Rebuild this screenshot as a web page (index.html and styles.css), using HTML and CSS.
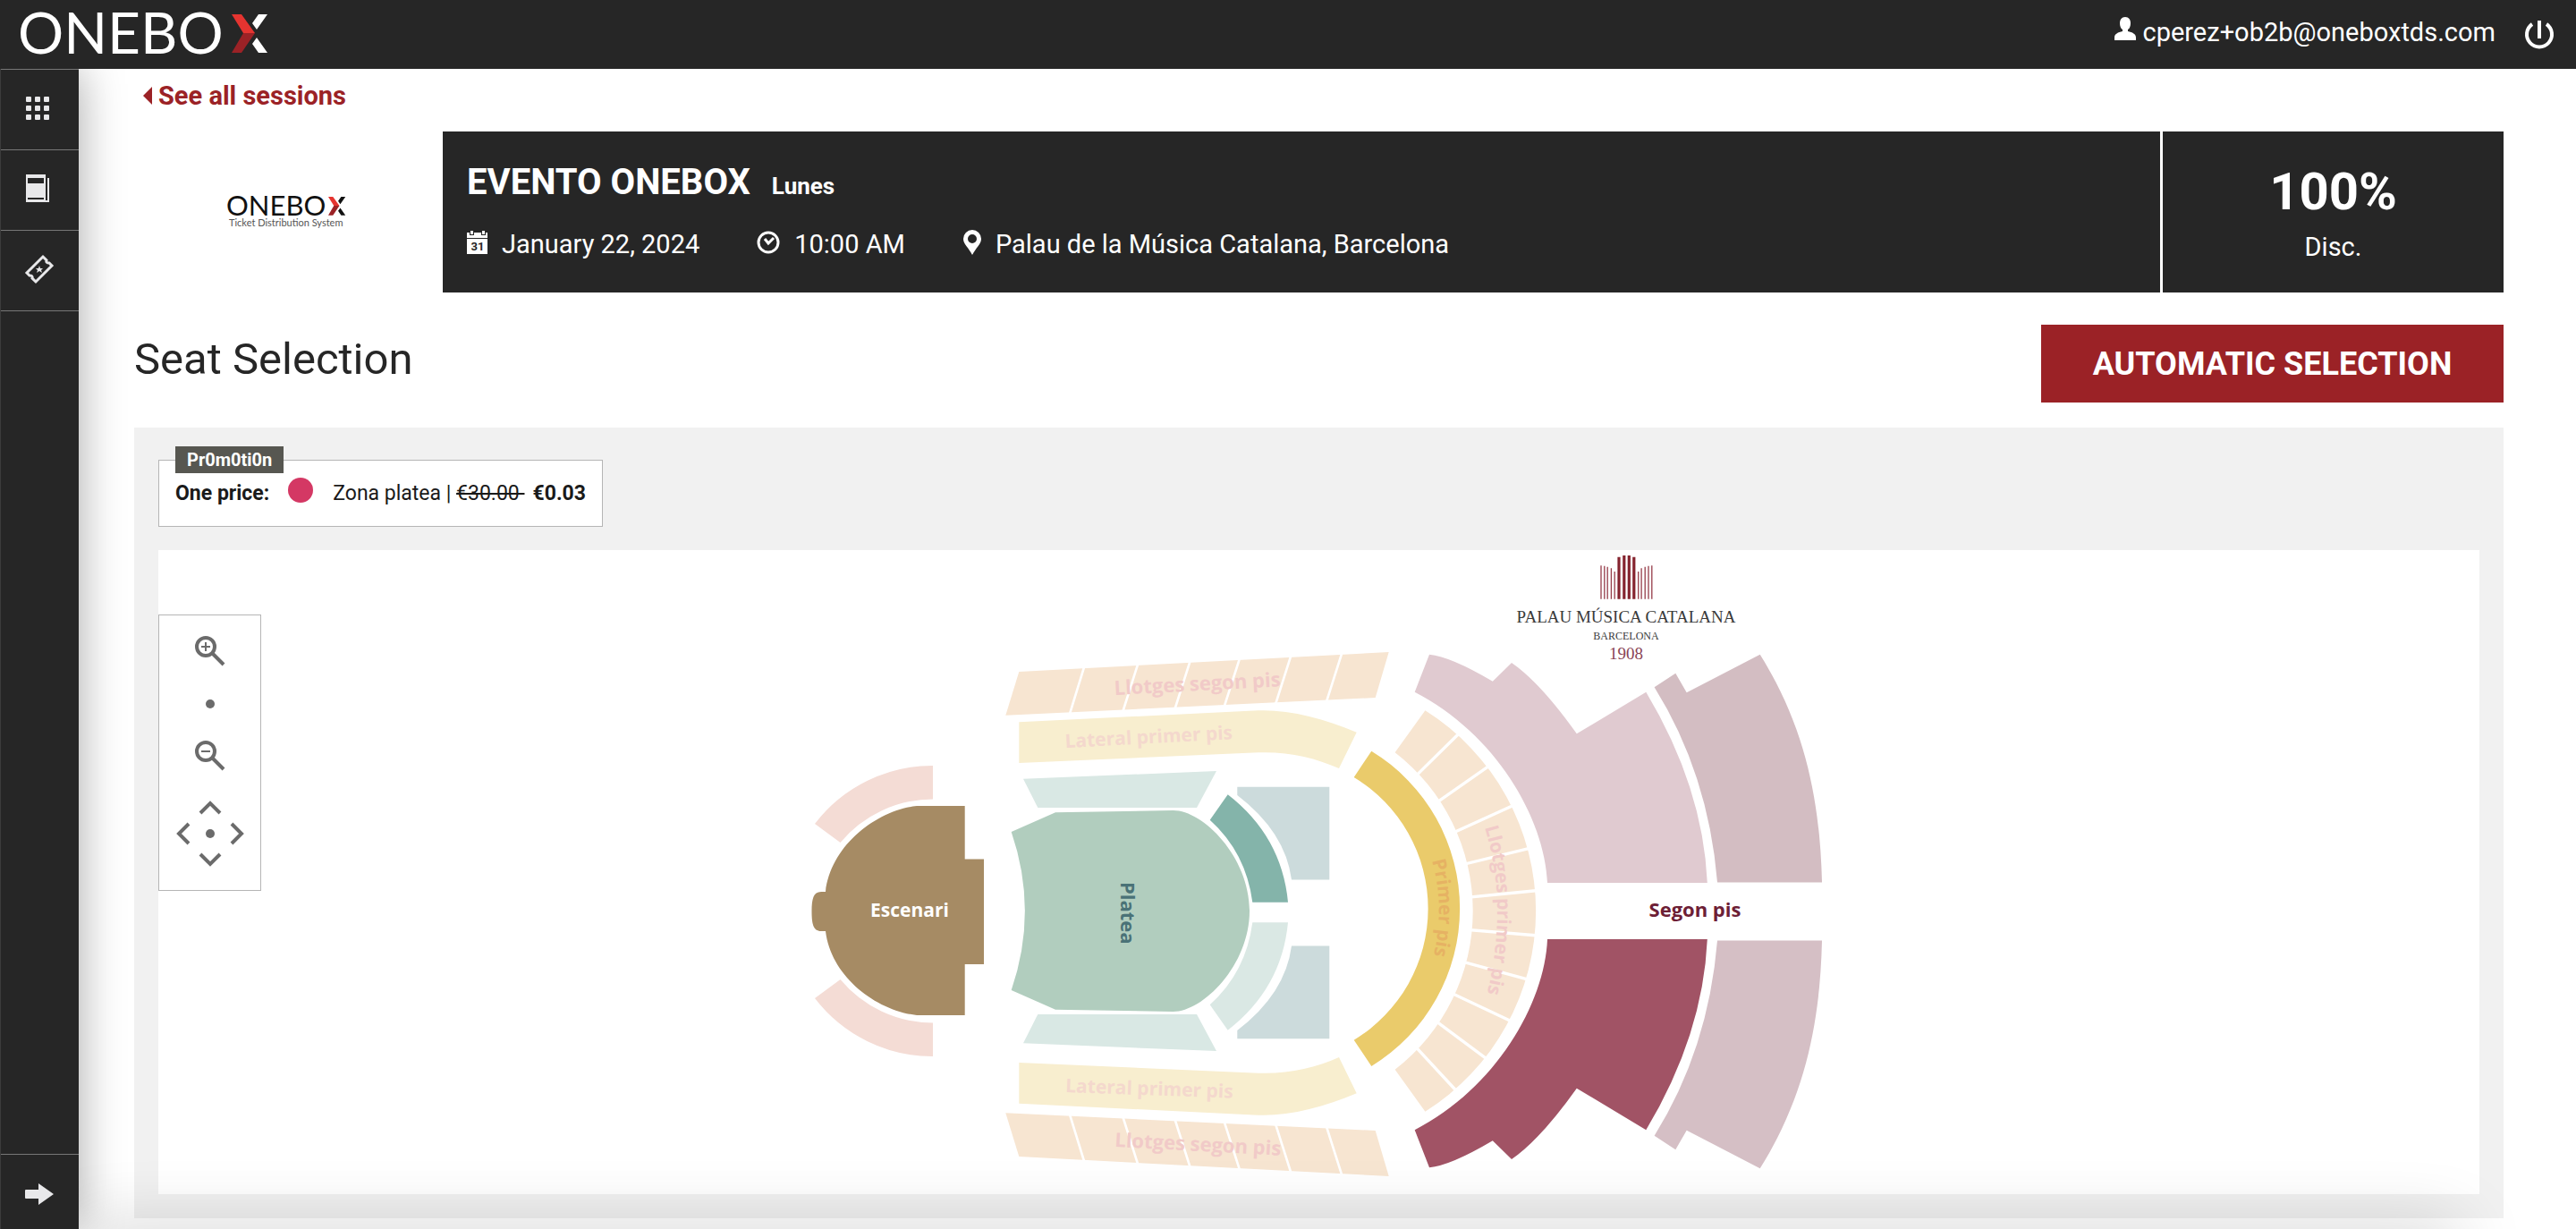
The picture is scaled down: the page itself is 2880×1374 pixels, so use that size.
FILE: index.html
```html
<!doctype html>
<html lang="en">
<head>
<meta charset="utf-8">
<title>Onebox - Seat Selection</title>
<link rel="stylesheet" href="styles.css">
</head>

<body>
<header class="header">
	<a class="logo" href="#" aria-label="Onebox">
		<svg width="280" height="77" viewBox="0 0 280 77">
			<text class="logo-text" x="0" y="60">ONEBO</text>
			<g transform="translate(239 16)">
				<path fill="#e53430" d="M0 0h11l15 21H13z"/>
				<path fill="#9b2226" d="M13 21h13L11 43H0z"/>
				<path fill="#fff" d="M30 0h10L28 17l-5-7zM28 26l12 17H30l-7-10z"/>
			</g>
		</svg>
	</a>
	<div class="user">
		<svg width="24" height="27" viewBox="0 0 24 27"><path fill="#fff" d="M12 0c4 0 6 3 6 7 0 3-1 6-3 7v2c5 1 9 3 9 7v3H0v-3c0-4 4-6 9-7v-2c-2-1-3-4-3-7 0-4 2-7 6-7z"/></svg>
		<span class="mail">cperez+ob2b@oneboxtds.com</span>
		<button class="power" aria-label="Log out">
			<svg width="34" height="34" viewBox="0 0 34 34" fill="none" stroke="#fff" stroke-width="4"><path d="M17 1v20"/><path d="M9 5a14 14 0 1 0 16 0"/></svg>
		</button>
	</div>
</header>

<div class="page">
<nav class="sidebar">
	<ul class="menu">
		<li><a href="#" aria-label="Catalog"><svg width="32" height="32" viewBox="0 0 32 32" fill="#e8e8ea"><rect x="1" y="3" width="6" height="6" rx="1"/><rect x="11" y="3" width="6" height="6" rx="1"/><rect x="21" y="3" width="6" height="6" rx="1"/><rect x="1" y="13" width="6" height="6" rx="1"/><rect x="11" y="13" width="6" height="6" rx="1"/><rect x="21" y="13" width="6" height="6" rx="1"/><rect x="1" y="23" width="6" height="6" rx="1"/><rect x="11" y="23" width="6" height="6" rx="1"/><rect x="21" y="23" width="6" height="6" rx="1"/></svg></a></li>
		<li><a href="#" aria-label="Reports"><svg width="32" height="32" viewBox="0 0 32 32"><path fill="#e8e8ea" d="M1 0h22v29H3v-1h18V26H1z"/><path fill="#e8e8ea" d="M1 26h2v3h22V4h2v27H1z"/><path fill="#262626" d="M3 4h18v6H3z"/></svg></a></li>
		<li><a href="#" aria-label="Tickets"><svg width="32" height="32" viewBox="0 0 32 32"><path fill="none" stroke="#e8e8ea" stroke-width="3" d="M20 2l4 4q-1 3 3 3l3 3-18 18-4-4q1-3-3-3l-3-3z"/><path fill="#e8e8ea" d="M16 12l1 3 3 0-2 2 1 3-3-2-3 2 1-3-2-2 3 0z"/></svg></a></li>
	</ul>
	<button class="expand" aria-label="Expand menu"><svg width="34" height="26" viewBox="0 0 34 26"><path fill="#e8e8ea" d="M2 8h14V1l17 12-17 12v-7H2q-1 0-1-1V9q0-1 1-1z"/></svg></button>
</nav>

<main class="content">
	<a class="back" href="#"><svg width="10" height="20" viewBox="0 0 10 20"><path fill="#9b2226" d="M10 0v20L0 10z"/></svg>See all sessions</a>

	<section class="event">
		<div class="event-img">
			<svg width="138" height="60" viewBox="0 0 138 60">
				<text class="logo-text-sm" x="1" y="34">ONEBO</text>
				<g transform="translate(115 13) scale(.48)">
					<path fill="#e53430" d="M0 0h11l15 21H13z"/>
					<path fill="#9b2226" d="M13 21h13L11 43H0z"/>
					<path fill="#111" d="M30 0h10L28 17l-5-7zM28 26l12 17H30l-7-10z"/>
				</g>
				<text class="logo-tag" x="4" y="46">Ticket Distribution System</text>
			</svg>
		</div>
		<div class="event-info">
			<h1>EVENTO ONEBOX <small>Lunes</small></h1>
			<ul class="facts">
				<li><svg width="24" height="26" viewBox="0 0 24 26"><path fill="#fff" d="M0 2h3v3h5V2h8v3h5V2h2v6H0zM4 0h3v4H4zM17 0h3v4h-3zM0 9h23v17H0z"/><text class="cal-num" x="12" y="22">31</text></svg>January 22, 2024</li>
				<li><svg width="27" height="27" viewBox="0 0 27 27" fill="none" stroke="#fff" stroke-width="3"><circle cx="13" cy="13" r="11"/><path d="M9 9l4 5 6-6"/></svg>10:00 AM</li>
				<li><svg width="22" height="28" viewBox="0 0 22 28"><path fill="#fff" fill-rule="evenodd" d="M11 0a10 10 0 0 1 10 10c0 6-6 10-10 18C7 20 1 16 1 10A10 10 0 0 1 11 0zm0 5a5 5 0 1 0 0 10 5 5 0 0 0 0-10z"/></svg>Palau de la Música Catalana, Barcelona</li>
			</ul>
		</div>
		<div class="event-disc">
			<strong>100%</strong>
			<span>Disc.</span>
		</div>
	</section>

	<div class="title">
		<h2>Seat Selection</h2>
		<button class="auto">AUTOMATIC SELECTION</button>
	</div>

	<section class="panel">
		<div class="promo">
			<span class="promo-tag">Pr0m0ti0n</span>
			<b>One price:</b>
			<i class="dot"></i>
			<span>Zona platea | <del>€30.00 </del></span>
			<b>€0.03</b>
		</div>
		<div class="map">
			<div class="controls">
				<button aria-label="Zoom in"><svg width="40" height="40" viewBox="0 0 40 40"><circle cx="15" cy="16" r="10"/><path d="M22 23l13 13"/><path class="thin" d="M15 11v10M10 16h10"/></svg></button>
				<span class="level"></span>
				<button aria-label="Zoom out"><svg width="40" height="40" viewBox="0 0 40 40"><circle cx="15" cy="16" r="10"/><path d="M22 23l13 13"/><path class="thin" d="M10 16h10"/></svg></button>
				<div class="pad">
					<button class="up" aria-label="Up"><svg width="28" height="28" viewBox="0 0 28 28"><path d="M3 19l11-11 11 11"/></svg></button>
					<button class="lf" aria-label="Left"><svg width="28" height="28" viewBox="0 0 28 28"><path d="M18 3L7 14l11 11"/></svg></button>
					<span class="level"></span>
					<button class="rt" aria-label="Right"><svg width="28" height="28" viewBox="0 0 28 28"><path d="M10 3l11 11-11 11"/></svg></button>
					<button class="dn" aria-label="Down"><svg width="28" height="28" viewBox="0 0 28 28"><path d="M3 9l11 11L25 9"/></svg></button>
				</div>
			</div>
			<svg class="venue" viewBox="177 615 2595 720">
				<defs>
					<g id="wing">
						<path fill="#f4dcd5" d="M911 921A166 166 0 0 1 1043 856V893.500A135 135 0 0 0 939.500 942z"/>
						<path fill="#d9e8e4" d="M1144 870.700L1360 862 1338 903H1160.300z"/>
					</g>
					<g id="lateral">
						<path fill="#ccdbdc" d="M1383.300 879.700H1486.300V983.500H1444Q1437 930 1383.300 889z"/>
						<path fill="#f8eecf" d="M1139.300 807.300L1406.700 794.300C1440 793 1480 803 1516.700 818.700L1497 859C1470 847 1440 840 1406.700 841.300L1139.300 853z"/>
					</g>
					<g id="boxes">
						<path fill="#f7e5d1" d="M1139.300 751L1552.700 729 1537.700 780 1124.300 799.700z"/>
						<path stroke="#fff" stroke-width="2.600" d="M1212 746L1196 798M1272 743L1255.500 795M1330.300 740L1313.700 792M1385.700 737L1369 789M1443 734L1426.300 786.500M1500 731L1483.300 783.500"/>
					</g>
					<path id="second" d="M1581.700 773.700L1598 731.700Q1622 734 1668.800 761.700L1690 741Q1722 763 1762.800 820.300L1840.300 773.700Q1904 880 1908.800 987H1730C1727 915 1672 820 1581.700 773.700z"/>
					<path id="third" d="M1849.600 768.300L1873.300 752.700 1885.700 774.300 1967.700 731.700C2020 815 2035 900 2037 986.500H1920Q1910 865 1849.600 768.300z"/>
					<path id="balcony" d="M1372.700 888.300Q1433 935 1440 1008.700H1400.300Q1393 953 1352.700 916.700z"/>
					<path id="arc1" d="M1601 962Q1616 1015 1602 1072"/>
					<path id="arc2" d="M1660 925Q1688 1015 1660 1122"/>
				</defs>

				<!-- stage -->
				<path fill="#a68b64" d="M1025 901H1078.700V960.500H1100V1078H1078.700V1135H1025C980 1130 929 1092 923 1041H918C909 1041 907.500 1032 907.500 1019S909 997 918 997H923C929 945 980 906 1025 901z"/>
				<use href="#wing"/>
				<use href="#lateral"/>
				<use href="#boxes"/>
				<use href="#wing" transform="translate(0 2037) scale(1 -1)"/>
				<use href="#lateral" transform="translate(0 2041) scale(1 -1)"/>
				<use href="#boxes" transform="translate(0 2044) scale(1 -1)"/>

				<!-- stalls -->
				<path fill="#b1cdbe" d="M1130.700 930L1180 908.300 1311.700 906C1345 906 1397 958 1397 1018.500S1345 1131 1311.700 1131L1180 1128.700 1130.700 1107Q1161 1018.500 1130.700 930z"/>
				<use href="#balcony" fill="#84b4aa"/>
				<use href="#balcony" fill="#dae8e4" transform="translate(0 2040) scale(1 -1)"/>

				<!-- first floor -->
				<path fill="#eacb6b" d="M1533.300 839.700A206.400 206.400 0 0 1 1533.300 1192L1513.700 1162.700A171.500 171.500 0 0 0 1513.700 869z"/>
				<path fill="#f7e5d1" d="M1593.400 794.300A265 265 0 0 1 1593.400 1242.700L1559.600 1195.700A223.800 223.800 0 0 0 1559.600 841.300z"/>
				<path stroke="#fff" stroke-width="3.400" stroke-linecap="square" d="M1584.800 865.700L1630.200 821M1608.900 895.300L1664.300 856.700M1628.500 929.300L1691.200 900.700M1640.500 965.300L1709 948.700M1646.700 1002.700L1717 995.700M1646.700 1040L1716.600 1045.700M1639.500 1076.300L1706.700 1094.700M1626.400 1112L1688 1141M1607.800 1143.300L1660.500 1182.700M1584.800 1172.700L1626.800 1218"/>

				<!-- second floor -->
				<use href="#second" fill="#e0cad0"/>
				<use href="#third" fill="#d3bdc2"/>
				<use href="#second" fill="#a15365" transform="translate(0 2037) scale(1 -1)"/>
				<use href="#third" fill="#d5bfc5" transform="translate(0 2038) scale(1 -1)"/>

				<g class="zone">
					<text class="sm" x="1017" y="1025" fill="#fff" text-anchor="middle">Escenari</text>
					<text transform="translate(1253 986) rotate(90)" fill="#4a7277">Platea</text>
					<text x="1895" y="1025" fill="#6d2036" text-anchor="middle">Segon pis</text>
					<text transform="translate(1246 777) rotate(-3)" fill="#f1cac8">Llotges segon pis</text>
					<text class="sm" transform="translate(1191 836) rotate(-3)" fill="#f4d8cd">Lateral primer pis</text>
					<text class="sm" transform="translate(1191 1221) rotate(2)" fill="#f4d8cd">Lateral primer pis</text>
					<text transform="translate(1246 1282) rotate(3)" fill="#f1cac8">Llotges segon pis</text>
					<text class="sm" fill="#e6b263"><textPath href="#arc1">Primer pis</textPath></text>
					<text class="sm" fill="#f1cac8"><textPath href="#arc2">Llotges primer pis</textPath></text>
				</g>

				<!-- venue logo -->
				<path stroke="#963c49" stroke-width="1.300" d="M1790 632.300V669.700M1793.800 632.700V669.700M1797.200 633.700V669.700M1801.400 635.300V669.700M1805.200 639V669.700M1831.700 639V669.700M1835.100 635.300V669.700M1839.200 633.700V669.700M1843 632.700V669.700M1846.800 632.300V669.700"/>
				<path stroke="#85242f" stroke-width="3.200" d="M1810 622.700V669.700M1815.800 621V669.700M1821.300 621V669.700M1826.800 622.700V669.700"/>
				<g class="palau" text-anchor="middle">
					<text x="1818" y="696" font-size="19">PALAU MÚSICA CATALANA</text>
					<text x="1818" y="715" font-size="12">BARCELONA</text>
					<text x="1818" y="737" font-size="19" fill="#8a4456">1908</text>
				</g>
			</svg>
		</div>
	</section>
</main>
</div>
<div class="foot"></div>
</body>
</html>
```
FILE: styles.css
```css
*{margin:0; padding:0; box-sizing:border-box;}
body{font-family:Roboto,"Liberation Sans",sans-serif; font-size:29px; color:#262626; background:#fff; min-height:100vh; display:flex; flex-direction:column; overflow-x:hidden;}
ul{list-style:none;}
a{color:inherit; text-decoration:none;}
button{font:inherit; border:0; background:none; cursor:pointer;}
svg{display:block; overflow:visible;}

.header{height:77px; background:#262626; color:#fff; display:flex; justify-content:space-between; align-items:center; padding:0 24px 0 20px; position:relative; z-index:3;}
.logo-text{font-family:Lato,sans-serif; font-size:64px; fill:#fff;}
.user{display:flex; align-items:center; gap:7px;}
.user>svg{margin-bottom:12px;}
.mail{line-height:32px; margin-bottom:6px;}
.power{margin-left:25px;}

.page{flex:1; display:flex;}
.sidebar{width:88px; background:#262626; border-left:1px solid #3c3c3c; display:flex; flex-direction:column; justify-content:space-between; position:relative; z-index:2; box-shadow:0 0 50px rgba(0,0,0,.35);}
.menu{border-bottom:1px solid #777;}
.menu a{height:90px; border-top:1px solid #777; display:flex; align-items:center; padding:0 0 4px 27px;}
.expand{height:84px; border-top:1px solid #777; display:flex; align-items:center; padding:4px 0 0 26px;}

.content{flex:1; padding:0 81px 12px 62px; display:flex; flex-direction:column;}
.back{height:70px; padding:0 0 10px 10px; color:#9b2226; font-weight:700; display:flex; align-items:center; gap:7px;}

.event{display:flex; height:180px; gap:3px; color:#fff;}
.event-img{width:342px; display:flex; align-items:center; justify-content:center;}
.logo-text-sm{font-family:Lato,sans-serif; font-size:31px; fill:#111;}
.logo-tag{font-family:Lato,sans-serif; font-size:11px; fill:#555;}
.event-info{flex:1; background:#262626; padding:30px 27px;}
.event-info h1{font-size:40px; line-height:54px;}
.event-info small{font-size:26px; margin-left:14px;}
.facts{display:flex; gap:64px; margin-top:20px;}
.facts li{display:flex; align-items:center; gap:15px; line-height:36px;}
.facts svg{margin-bottom:4px;}
.cal-num{font:700 13px Roboto,sans-serif; fill:#262626; text-anchor:middle;}
.event-disc{width:381px; background:#262626; padding-top:14px; display:flex; flex-direction:column; align-items:center; justify-content:center;}
.event-disc strong{font-size:58px; line-height:64px;}
.event-disc span{line-height:60px;}

.title{display:flex; justify-content:space-between; padding:36px 0 28px;}
.title h2{font-size:49px; font-weight:400; line-height:78px;}
.auto{width:517px; height:87px; background:#9b2226; color:#fff; font-size:36px; font-weight:700;}

.panel{flex:1; background:#f1f1f1; padding:36px 27px 27px;}
.promo{position:relative; display:inline-flex; height:75px; border:1px solid #b5b5b5; background:#fff; padding:0 18px; align-items:center; font-size:23px; color:#1a1a1a;}
.promo-tag{position:absolute; left:18px; top:-16px; height:30px; line-height:30px; padding:0 13px; background:#575751; color:#fff; font-size:20px; font-weight:700;}
.promo .dot{width:28px; height:28px; border-radius:50%; background:#d43864; margin:0 22px 8px 21px;}
.promo del{white-space:pre;}
.promo b:last-child{margin-left:9px;}
.map{position:relative; background:#fff; margin-top:26px;}
.venue{width:100%;}
.zone{font-family:"Open Sans","Noto Sans",sans-serif; font-size:22px; font-weight:700;}
.zone .sm{font-size:21px;}
.palau{font-family:"Liberation Serif",serif; fill:#3a3a3a;}

.controls{position:absolute; left:0; top:72px; width:115px; border:1px solid #b5b5b5; background:#fff; padding:19px 0 21px; display:flex; flex-direction:column; align-items:center;}
.controls svg{fill:none; stroke:#6b6b6b; stroke-width:4;}
.controls .thin{stroke-width:2;}
.level{width:10px; height:10px; border-radius:50%; background:#6b6b6b; margin:35px 0 32px;}
.pad{display:grid; grid-template-columns:28px 28px 28px; grid-template-rows:28px 28px 28px; place-items:center; margin-top:26px;}
.pad .level{margin:0;}
.up,.dn{grid-column:2;}
.lf{grid-column:1;}

.foot{position:fixed; left:88px; right:130px; bottom:-40px; height:40px; box-shadow:0 0 76px rgba(0,0,0,.22); z-index:1;}
```
